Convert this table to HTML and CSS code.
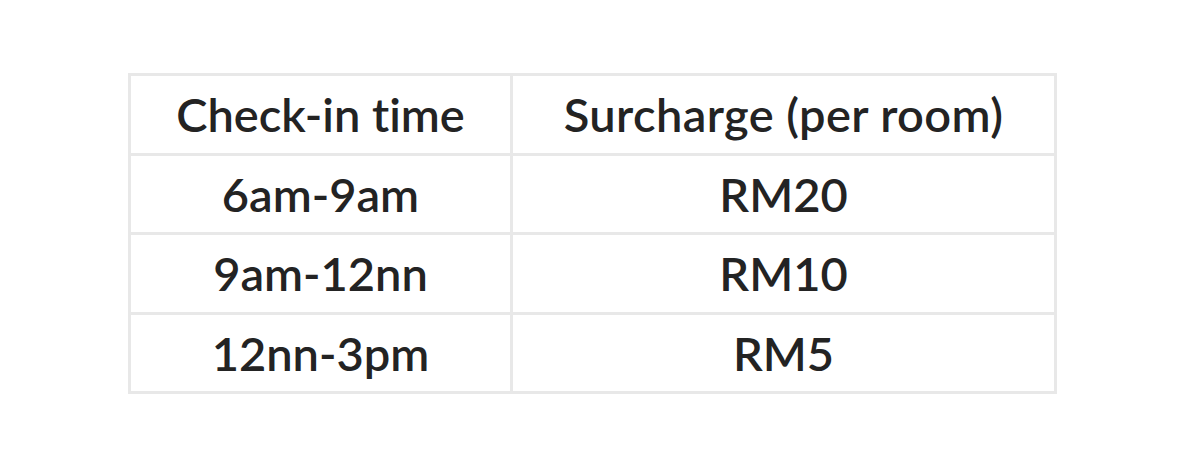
FILE: index.html
```html
<!DOCTYPE html>
<html>
<head>
<meta charset="utf-8">
<link rel="stylesheet" href="styles.css">
</head>
<body>
<div class="page">
<table class="rates">
<tr><th class="c1">Check-in time</th><th class="c2">Surcharge (per room)</th></tr>
<tr><td>6am-9am</td><td>RM20</td></tr>
<tr><td>9am-12nn</td><td>RM10</td></tr>
<tr><td>12nn-3pm</td><td>RM5</td></tr>
</table>
</div>
</body>
</html>
```
FILE: styles.css
```css
html, body { margin: 0; padding: 0; background: #fff; }
.page { padding: 73px 0 0 128px; }
.rates {
  border-collapse: collapse;
  width: 929px;
  font-family: Lato, "Open Sans", "Liberation Sans", sans-serif;
  font-weight: 600;
  font-size: 47px;
  line-height: 1.2;
  font-variant-ligatures: none;
  font-feature-settings: "liga" 0, "dlig" 0;
  color: #232323;
}
.rates th, .rates td {
  border: 3px solid #e8e8e8;
  height: 76.5px;
  padding: 0;
  text-align: center;
  vertical-align: middle;
  font-weight: 600;
}
.rates .c1 { width: 379px; }
.rates .c2 { letter-spacing: 0.4px; }
```
